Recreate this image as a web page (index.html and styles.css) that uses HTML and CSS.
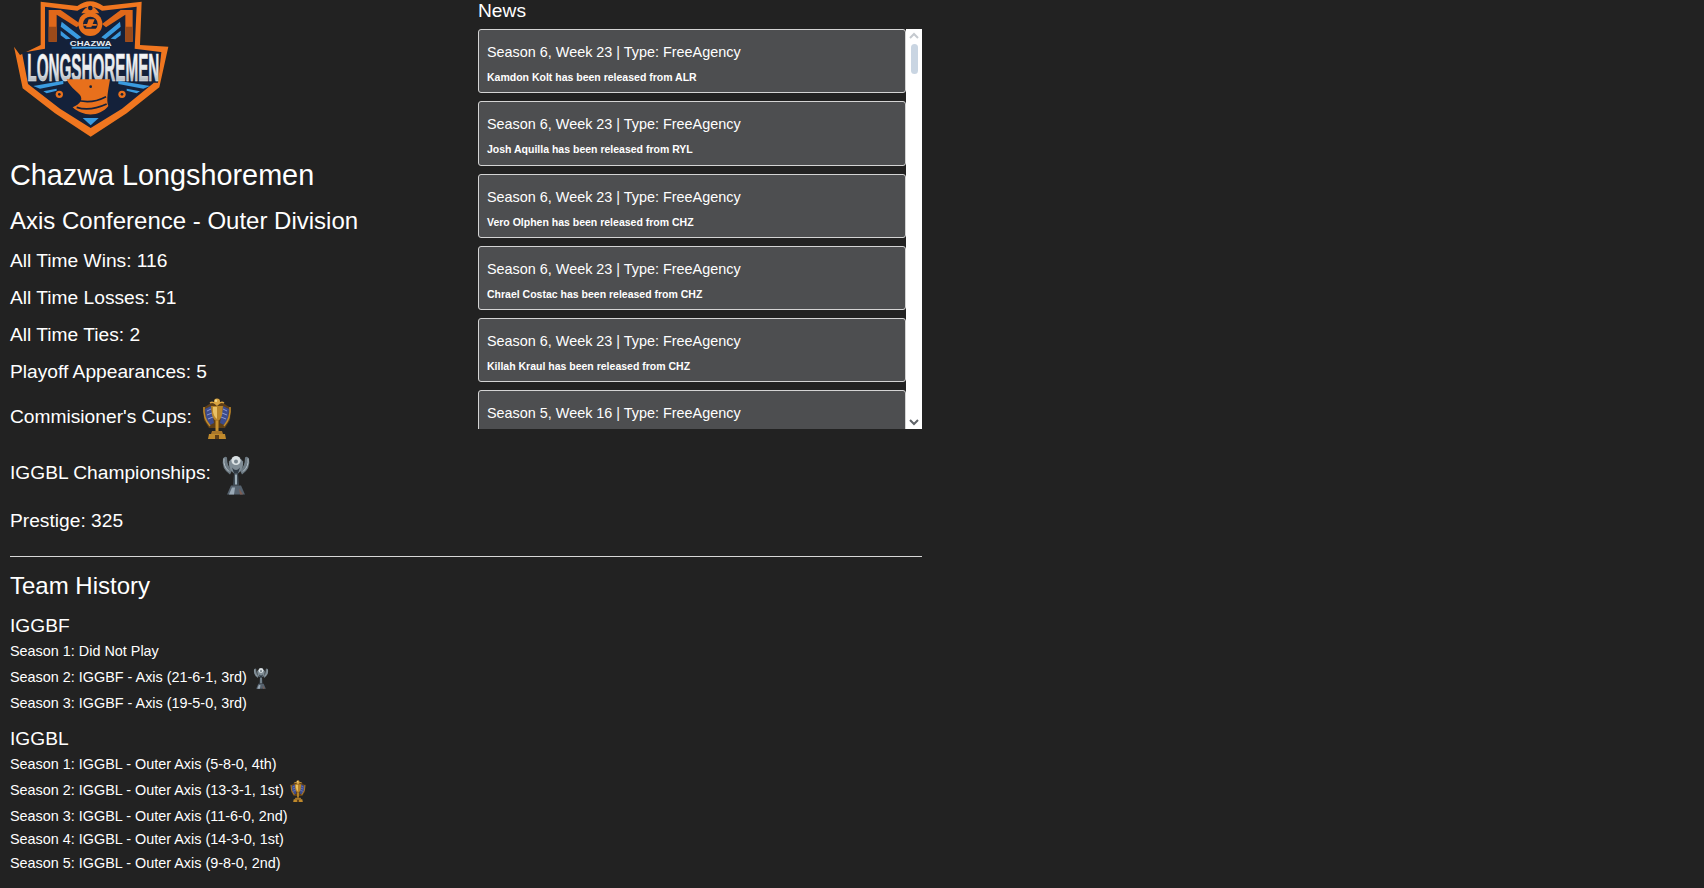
FILE: index.html
```html
<!DOCTYPE html>
<html lang="en">
<head>
    <meta charset="UTF-8">
    <title>Chazwa Longshoremen</title>
    <link rel="stylesheet" href="styles.css">
</head>
<body>
    <svg class="defs" width="0" height="0">
        <defs>
            <linearGradient id="letters" x1="0" y1="0" x2="0" y2="1">
                <stop offset="0" stop-color="#ffffff"/>
                <stop offset="0.55" stop-color="#e6e9ec"/>
                <stop offset="1" stop-color="#8f98a3"/>
            </linearGradient>
        </defs>
        <symbol id="cup-gold" viewBox="0 0 30 41">
            <path d="M6 7 L10 4 H20 L24 7 L29 10 L28 22 L23 30 H7 L2 22 L1 10 Z" fill="#5e3f17"/>
            <path d="M3 11 L9 8 L12 25 L8 27 L4 21 Z M27 11 L21 8 L18 25 L22 27 L26 21 Z" fill="#3d4c8d"/>
            <path d="M5 13 L9 11 M5 17 L10 15 M6 21 L11 19 M25 13 L21 11 M25 17 L20 15 M24 21 L19 19" stroke="#8d9ad0" stroke-width="1"/>
            <path d="M2 9 Q1 20 8 28 M28 9 Q29 20 22 28" fill="none" stroke="#c08a2c" stroke-width="1.5"/>
            <path d="M8 5 Q11 3 15 7 Q19 3 22 5" fill="none" stroke="#d9a441" stroke-width="1.5"/>
            <path d="M9 8 H21 L20 17 Q18 23 15 23 Q12 23 10 17 Z" fill="#b9852a"/>
            <path d="M11 9 H15 V21 Q12 19 11 14 Z" fill="#e9c165"/>
            <circle cx="15" cy="3.5" r="3" fill="#d9a441"/>
            <circle cx="14" cy="2.8" r="1.2" fill="#f3d98e"/>
            <rect x="13.5" y="23" width="3" height="10" fill="#c8922e"/>
            <path d="M10 33 H20 L21 36 H9 Z" fill="#a9772a"/>
            <path d="M6 41 L7 36 H23 L24 41 Z" fill="#c08a2c"/>
            <path d="M13 37 H17 V41 H13 Z" fill="#5e3f17"/>
        </symbol>
        <symbol id="cup-silver" viewBox="0 0 30 40">
            <path d="M2 4 Q0 14 9 20 L11 16 Q6 12 6 3 Q4 1 2 4 Z M28 4 Q30 14 21 20 L19 16 Q24 12 24 3 Q26 1 28 4 Z" fill="#6d7a83"/>
            <path d="M3 4 Q2 12 8 17 M27 4 Q28 12 22 17" fill="none" stroke="#b4bfc6" stroke-width="1"/>
            <path d="M8 7 Q15 -2 22 7 Q23 16 15 20 Q7 16 8 7 Z" fill="#7f8c95"/>
            <circle cx="15" cy="6" r="4.6" fill="#d9e0e3"/>
            <circle cx="15" cy="7" r="2" fill="#78858e"/>
            <path d="M11 13 Q15 18 19 13 L17 19 H13 Z" fill="#2f3a44"/>
            <path d="M13 19 H17 L18 31 H12 Z" fill="#3f4a54"/>
            <path d="M14 20 H16 V30 H14 Z" fill="#9fb0ba"/>
            <path d="M6 40 L10 31 H20 L24 40 Z" fill="#56626e"/>
            <path d="M8 40 L11 33 H14 L13 40 Z" fill="#9aa9b6"/>
            <path d="M19 40 L18 34 L22 40 Z" fill="#7f5d52"/>
        </symbol>
    </svg>

    <div class="page">
        <div class="top">
            <div class="team">
                <svg class="logo" viewBox="30 0 480 420">
                    <path d="M122 5 L232 18 Q270 -10 310 18 L425 5 L420 135 L505 140 L478 262 L380 340 L272 410 L165 340 L68 265 L42 140 L60 165 L122 135 Z" fill="#f0761f"/>
                    <path d="M135 20 L232 32 Q270 8 306 32 L410 20 L404 146 L482 156 L460 250 L366 326 L272 384 L180 326 L84 252 L66 158 L135 146 Z" fill="#14213a"/>
                    <path d="M146 30 H182 L242 72 L230 82 L170 44 V125 H146 Z M398 30 H362 L306 72 L318 82 L376 44 V125 H398 Z" fill="#e0681a"/>
                    <path d="M146 80 H170 V125 H146 Z M376 80 H398 V125 H376 Z" fill="#9a4a1a"/>
                    <path d="M185 65 L244 112 L232 118 L182 80 Z M182 92 L212 116 L198 118 L182 106 Z M360 65 L304 112 L316 118 L362 80 Z M362 92 L332 116 L346 118 L362 106 Z" fill="#3a9be0"/>
                    <circle cx="271" cy="72" r="36" fill="#e8701c"/>
                    <circle cx="271" cy="72" r="22" fill="#14213a"/>
                    <path d="M252 86 H296 L288 96 H244 Z M266 58 L284 58 L274 82 H258 Z M250 72 H290 V77 H250 Z" fill="#e8701c"/>
                    <path d="M244 40 Q271 -2 298 40 Z" fill="#e8701c"/>
                    <circle cx="271" cy="24" r="7" fill="#14213a"/>
                    <path d="M215 140 H330 V146 H215 Z" fill="#3a9be0"/>
                    <text class="logo-top" x="272" y="137" text-anchor="middle" textLength="125" lengthAdjust="spacingAndGlyphs">CHAZWA</text>
                    <path d="M72 156 H484 L474 248 H86 Z" fill="#14213a"/>
                    <text class="logo-name" transform="translate(280 244) scale(1 2.57)" text-anchor="middle" textLength="396" lengthAdjust="spacingAndGlyphs">LONGSHOREMEN</text>
                    <path d="M100 258 L190 242 V252 L120 266 Z M450 258 L355 242 V252 L430 266 Z M240 240 H300 V244 H240 Z M130 274 L170 266 V272 L140 280 Z M420 274 L380 266 V272 L410 280 Z" fill="#3a9be0"/>
                    <path d="M200 238 H330 C325 270 318 300 325 318 C300 350 250 352 218 322 C240 312 250 300 240 285 C225 270 208 258 200 238 Z" fill="#e8701c"/>
                    <path d="M225 298 Q270 315 318 290 M230 322 Q270 335 320 312" fill="none" stroke="#14213a" stroke-width="5"/>
                    <circle cx="272" cy="260" r="11" fill="#e8701c"/>
                    <circle cx="272" cy="260" r="4" fill="#14213a"/>
                    <circle cx="178" cy="283" r="11" fill="#e8701c"/>
                    <circle cx="178" cy="283" r="4" fill="#14213a"/>
                    <circle cx="366" cy="283" r="11" fill="#e8701c"/>
                    <circle cx="366" cy="283" r="4" fill="#14213a"/>
                    <path d="M248 354 H296 L272 376 Z" fill="#3a9be0"/>
                </svg>
                <h2 class="team-name">Chazwa Longshoremen</h2>
                <h3 class="team-conf">Axis Conference - Outer Division</h3>
                <p class="stat">All Time Wins: 116</p>
                <p class="stat">All Time Losses: 51</p>
                <p class="stat">All Time Ties: 2</p>
                <p class="stat">Playoff Appearances: 5</p>
                <p class="stat stat-cup">Commisioner's Cups: <svg class="cup"><use href="#cup-gold"/></svg></p>
                <p class="stat stat-cup">IGGBL Championships: <svg class="cup"><use href="#cup-silver"/></svg></p>
                <p class="stat">Prestige: 325</p>
            </div>

            <div class="news">
                <h3 class="news-title">News</h3>
                <div class="news-box">
                    <div class="news-list">
                        <div class="news-item">
                            <div class="news-head">Season 6, Week 23 | Type: FreeAgency</div>
                            <div class="news-text">Kamdon Kolt has been released from ALR</div>
                        </div>
                        <div class="news-item">
                            <div class="news-head">Season 6, Week 23 | Type: FreeAgency</div>
                            <div class="news-text">Josh Aquilla has been released from RYL</div>
                        </div>
                        <div class="news-item">
                            <div class="news-head">Season 6, Week 23 | Type: FreeAgency</div>
                            <div class="news-text">Vero Olphen has been released from CHZ</div>
                        </div>
                        <div class="news-item">
                            <div class="news-head">Season 6, Week 23 | Type: FreeAgency</div>
                            <div class="news-text">Chrael Costac has been released from CHZ</div>
                        </div>
                        <div class="news-item">
                            <div class="news-head">Season 6, Week 23 | Type: FreeAgency</div>
                            <div class="news-text">Killah Kraul has been released from CHZ</div>
                        </div>
                        <div class="news-item">
                            <div class="news-head">Season 5, Week 16 | Type: FreeAgency</div>
                        </div>
                    </div>
                    <div class="scrollbar">
                        <svg class="arrow" viewBox="0 0 16 15"><path d="M4 9 L8 5 L12 9" fill="none" stroke="#c4c9ce" stroke-width="2"/></svg>
                        <div class="thumb"></div>
                        <svg class="arrow arrow-down" viewBox="0 0 16 15"><path d="M4 6 L8 10 L12 6" fill="none" stroke="#5f6368" stroke-width="2"/></svg>
                    </div>
                </div>
            </div>
        </div>

        <hr class="rule">

        <h3 class="history-title">Team History</h3>

        <h4 class="league">IGGBF</h4>
        <div class="season">Season 1: Did Not Play</div>
        <div class="season">Season 2: IGGBF - Axis (21-6-1, 3rd) <svg class="cup-small"><use href="#cup-silver"/></svg></div>
        <div class="season">Season 3: IGGBF - Axis (19-5-0, 3rd)</div>

        <h4 class="league league-next">IGGBL</h4>
        <div class="season">Season 1: IGGBL - Outer Axis (5-8-0, 4th)</div>
        <div class="season">Season 2: IGGBL - Outer Axis (13-3-1, 1st) <svg class="cup-small"><use href="#cup-gold"/></svg></div>
        <div class="season">Season 3: IGGBL - Outer Axis (11-6-0, 2nd)</div>
        <div class="season">Season 4: IGGBL - Outer Axis (14-3-0, 1st)</div>
        <div class="season">Season 5: IGGBL - Outer Axis (9-8-0, 2nd)</div>
    </div>
</body>
</html>
```

FILE: styles.css
```css
body {
    margin: 0;
    background-color: #222222;
    color: #ffffff;
    font-family: "Liberation Sans", Arial, sans-serif;
}

.defs {
    position: absolute;
}

.page {
    width: 912px;
    margin-left: 10px;
}

.top {
    display: flex;
}

.team {
    width: 468px;
}

.logo {
    display: block;
    width: 160px;
    height: 140px;
}

.logo-top {
    font-family: "Liberation Sans", sans-serif;
    font-weight: bold;
    font-size: 24px;
    fill: #e6edf2;
}

.logo-name {
    font-family: "Liberation Sans", sans-serif;
    font-weight: bold;
    font-size: 46px;
    fill: url(#letters);
    stroke: #e6e9ec;
    stroke-width: 0.8px;
}

.team-name {
    margin: 18px 0 14px;
    font-size: 28.8px;
    font-weight: 400;
    line-height: 34px;
}

.team-conf {
    margin: 0 0 14px;
    font-size: 24px;
    font-weight: 400;
    line-height: 29px;
}

.stat {
    margin: 0 0 13px;
    font-size: 19.2px;
    line-height: 24px;
}

.stat-cup {
    display: flex;
    align-items: flex-start;
    gap: 10px;
    line-height: 40px;
}

.cup {
    width: 30px;
    height: 43px;
}

.cup-small {
    width: 16px;
    height: 22px;
    margin: 3px 0 3px 2px;
    vertical-align: middle;
}

.news {
    width: 444px;
}

.news-title {
    margin: 0 0 7px;
    font-size: 19.2px;
    font-weight: 400;
    line-height: 22px;
}

.news-box {
    display: flex;
    height: 400px;
}

.news-list {
    display: flex;
    flex-direction: column;
    gap: 8px;
    width: 428px;
    overflow: hidden;
}

.news-item {
    flex: none;
    box-sizing: border-box;
    height: 64.3px;
    padding: 13px 8px 0;
    background-color: #4d4e50;
    border: 1px solid #d4d4d4;
    border-radius: 3px;
}

.news-head {
    font-size: 14.4px;
    line-height: 18px;
}

.news-text {
    margin-top: 9px;
    font-size: 10.5px;
    font-weight: bold;
    line-height: 14px;
}

.scrollbar {
    display: flex;
    flex-direction: column;
    align-items: center;
    width: 16px;
    background-color: #ffffff;
}

.arrow {
    display: block;
    width: 16px;
    height: 15px;
}

.arrow-down {
    margin-top: auto;
}

.thumb {
    width: 7px;
    height: 30px;
    background-color: #c9d5e2;
    border-radius: 4px;
}

.rule {
    margin: 10px 0 0;
    border: 0;
    border-top: 1px solid #d8d8d8;
}

.history-title {
    margin: 14px 0 14px;
    font-size: 24px;
    font-weight: 400;
    line-height: 29px;
}

.league {
    margin: 0 0 3px;
    font-size: 19.2px;
    font-weight: 400;
    line-height: 23px;
}

.league-next {
    margin-top: 12px;
}

.season {
    font-size: 14.4px;
    line-height: 23.5px;
}
```
